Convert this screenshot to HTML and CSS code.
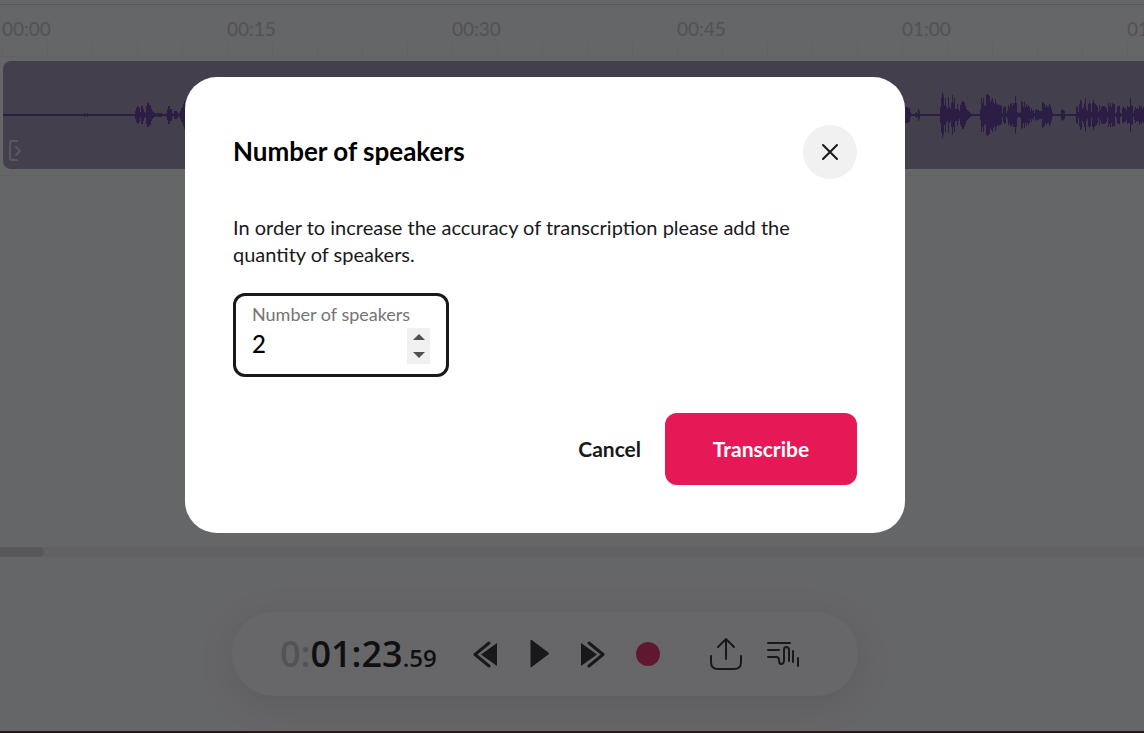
FILE: index.html
```html
<!DOCTYPE html>
<html lang="en">
<head>
    <meta charset="UTF-8">
    <meta name="viewport" content="width=device-width, initial-scale=1.0">
    <title>Number of speakers</title>
    <link rel="stylesheet" href="styles.css">
</head>
<body>

    <div class="editor">
        <main class="timeline">
            <div class="ruler">
                <span class="mark">00:00</span>
                <span class="mark">00:15</span>
                <span class="mark">00:30</span>
                <span class="mark">00:45</span>
                <span class="mark">01:00</span>
                <span class="mark">01:15</span>
            </div>
            <div class="track">
                <div class="clip">
                    <svg class="wave" height="108" aria-hidden="true"><path id="wavePath"/></svg>
                    <svg class="clip-handle" width="14" height="22" viewBox="0 0 14 22" aria-hidden="true">
                        <path d="M9 1H4Q2 1 2 3V18Q2 20 4 20H9M8 7L12 11L8 15"/>
                    </svg>
                </div>
            </div>
        </main>

        <div class="scrollbar"><div class="scrollbar-thumb"></div></div>

        <footer class="player-area">
            <div class="player">
                <div class="time"><span class="time-hours">0:</span>01:23<span class="time-ms">.59</span></div>
                <button type="button" class="icon-button rewind" aria-label="Rewind">
                    <svg width="26" height="28" viewBox="0 0 26 28">
                        <path d="M25 3V26L9 14.5Z" fill="currentColor"/>
                        <path d="M17 3L3 14.5L17 26" class="stroke thick"/>
                    </svg>
                </button>
                <button type="button" class="icon-button play" aria-label="Play">
                    <svg width="20" height="30" viewBox="0 0 20 30">
                        <path d="M1 1L19 14.5L1 28Z" fill="currentColor" stroke="currentColor" stroke-linejoin="round"/>
                    </svg>
                </button>
                <button type="button" class="icon-button forward" aria-label="Forward">
                    <svg width="26" height="28" viewBox="0 0 26 28">
                        <path d="M1 3V26L17 14.5Z" fill="currentColor"/>
                        <path d="M9 3L23 14.5L9 26" class="stroke thick"/>
                    </svg>
                </button>
                <button type="button" class="icon-button record" aria-label="Record"></button>
                <button type="button" class="icon-button export" aria-label="Export">
                    <svg width="34" height="32" viewBox="0 0 34 32">
                        <path d="M2 18V24Q2 31 9 31H25Q32 31 32 24V18M17 21V2M9 9L17 1L25 9" class="stroke"/>
                    </svg>
                </button>
                <button type="button" class="icon-button transcript" aria-label="Transcript">
                    <svg width="34" height="26" viewBox="0 0 34 26">
                        <path d="M2 2H24M2 9H13M2 16H10Q13 16 13 19Q13 23 15 23Q18 23 18 19V9Q18 6 20 6Q23 6 23 9V20M27 10V21M32 17V25" class="stroke"/>
                    </svg>
                </button>
            </div>
        </footer>
    </div>

    <div class="overlay">
        <form class="modal" role="dialog" aria-labelledby="modalTitle">
            <div class="modal-header">
                <h2 id="modalTitle">Number of speakers</h2>
                <button type="button" class="close" aria-label="Close">
                    <svg width="18" height="18" viewBox="0 0 18 18"><path d="M2 2L16 16M16 2L2 16"/></svg>
                </button>
            </div>
            <p>In order to increase the accuracy of transcription please add the quantity of speakers.</p>
            <div class="field">
                <label for="speakers">Number of speakers</label>
                <div class="field-row">
                    <input type="number" id="speakers" name="speakers" value="2" min="1">
                    <div class="spinner">
                        <button type="button" id="stepUp" aria-label="More speakers">
                            <svg width="12" height="6" viewBox="0 0 12 6"><path d="M0 6L6 0L12 6Z"/></svg>
                        </button>
                        <button type="button" id="stepDown" aria-label="Fewer speakers">
                            <svg width="12" height="6" viewBox="0 0 12 6"><path d="M0 0L6 6L12 0Z"/></svg>
                        </button>
                    </div>
                </div>
            </div>
            <div class="actions">
                <button type="button" class="cancel">Cancel</button>
                <button type="submit" class="submit">Transcribe</button>
            </div>
        </form>
    </div>

    <script src="script.js"></script>
</body>
</html>
```

FILE: styles.css
```css
* {
    margin: 0;
    padding: 0;
    box-sizing: border-box;
}

body {
    font-family: Lato, sans-serif;
    color: #18191c;
    background: #fafbfd;
    overflow: hidden;
}

button {
    border: none;
    background: none;
    font-family: inherit;
    color: inherit;
    cursor: pointer;
}

svg {
    display: block;
}

.editor {
    display: flex;
    flex-direction: column;
    height: 100vh;
    padding-top: 4px;
    border-bottom: 2px solid #581410;
}

/* Timeline */
.timeline {
    flex: 1;
    overflow: hidden;
    border-top: 1px solid #d4d5d9;
}

.ruler {
    display: flex;
    height: 52px;
    padding-left: 2px;
    border-bottom: 1px solid #f1f1f3;
    background: repeating-linear-gradient(90deg, #f1f1f3 0 1px, transparent 1px 45px) 2px 38px no-repeat;
}

.mark {
    flex: 0 0 225px;
    padding-top: 13px;
    font-size: 19px;
    line-height: 22px;
    color: #c0c1c6;
}

.track {
    padding: 4px 0 6px 3px;
    border-bottom: 1px solid #f1f1f3;
}

.clip {
    position: relative;
    height: 108px;
    overflow: hidden;
    border-radius: 8px 0 0 8px;
    background: #9989ac;
}

.wave {
    width: 100%;
    fill: #532892;
}

.clip-handle {
    position: absolute;
    left: 5px;
    bottom: 7px;
    fill: none;
    stroke: #d8d4de;
    stroke-width: 2;
    stroke-linecap: round;
    stroke-linejoin: round;
}

.scrollbar {
    height: 10px;
    background: #f1f1f3;
}

.scrollbar-thumb {
    width: 44px;
    height: 10px;
    border-radius: 0 5px 5px 0;
    background: #d4d4da;
}

/* Player */
.player-area {
    display: flex;
    justify-content: center;
    height: 174px;
    padding: 55px 54px 0 0;
}

.player {
    display: flex;
    align-items: center;
    width: 626px;
    height: 84px;
    padding-left: 48px;
    border-radius: 42px;
    background: #ffffff;
    box-shadow: 0 8px 36px rgba(24, 25, 28, 0.12);
}

.time {
    width: 192px;
    padding-top: 4px;
    font-family: "Open Sans", sans-serif;
    font-size: 36px;
    font-weight: 600;
    line-height: 48px;
    color: #000000;
    white-space: nowrap;
}

.time-hours {
    color: #c4c5ca;
}

.time-ms {
    font-size: 24px;
}

.icon-button {
    display: flex;
    flex: none;
}

.stroke {
    fill: none;
    stroke: currentColor;
    stroke-width: 2;
    stroke-linecap: round;
    stroke-linejoin: round;
}

.thick {
    stroke-width: 3;
}

.play {
    margin-left: 32px;
}

.forward,
.record {
    margin-left: 30px;
}

.record {
    width: 24px;
    height: 24px;
    border-radius: 50%;
    background: #e61957;
}

.export {
    margin-left: 49px;
}

.transcript {
    margin-left: 23px;
}

/* Modal */
.overlay {
    position: fixed;
    inset: 0;
    display: flex;
    justify-content: center;
    align-items: flex-start;
    padding: 77px 54px 0 0;
    background: rgba(24, 25, 28, 0.66);
}

.modal {
    width: 100%;
    max-width: 720px;
    padding: 48px;
    border-radius: 32px;
    background: #ffffff;
}

.modal-header {
    display: flex;
    justify-content: space-between;
    align-items: center;
}

h2 {
    padding-bottom: 2px;
    font-size: 26px;
    font-weight: 700;
    line-height: 36px;
    color: #000000;
}

.close {
    display: flex;
    justify-content: center;
    align-items: center;
    width: 54px;
    height: 54px;
    border-radius: 50%;
    background: #f1f1f1;
}

.close path {
    fill: none;
    stroke: #18191c;
    stroke-width: 2;
    stroke-linecap: round;
}

.modal p {
    margin: 35px 0 25px;
    font-size: 20px;
    line-height: 27px;
}

.field {
    width: 216px;
    height: 84px;
    padding: 8px 16px 0;
    border: 3px solid #18191c;
    border-radius: 12px;
}

.field label {
    display: block;
    font-size: 18px;
    line-height: 20px;
    color: #747474;
}

.field-row {
    display: flex;
    justify-content: space-between;
    padding-top: 4px;
}

.field input {
    width: 100%;
    min-width: 0;
    height: 30px;
    border: none;
    outline: none;
    font-family: inherit;
    font-size: 24px;
    font-weight: 500;
    color: #000000;
    background: none;
    appearance: textfield;
}

.field input::-webkit-inner-spin-button {
    display: none;
}

.spinner {
    display: flex;
    flex: none;
    flex-direction: column;
    width: 23px;
    height: 36px;
    background: #f0f0f0;
}

.spinner button {
    display: flex;
    flex: 1;
    justify-content: center;
    align-items: center;
}

.spinner path {
    fill: #505050;
}

.actions {
    display: flex;
    justify-content: flex-end;
    gap: 24px;
    margin-top: 36px;
}

.cancel,
.submit {
    height: 72px;
    padding-bottom: 2px;
    font-size: 21px;
    font-weight: 700;
}

.submit {
    width: 192px;
    border-radius: 12px;
    color: #ffffff;
    background: #e61957;
}
```

FILE: script.js
```js
// Peak heights, one per pixel, starting at each x of the clip
const peaks = {
    81: [2, 1, 1, 2],
    132: [4, 7, 9, 8, 7, 3, 9, 9, 6, 3, 2, 9, 12, 12, 10, 10, 6, 4, 3, 2, 2, 1, 2, 2, 2, 2, 2, 1, 1, 1, 1, 2, 5, 9, 9, 6, 6, 2, 1, 4, 4, 4, 3, 1, 2, 4, 7, 8, 11, 14],
    902: [8, 8, 8, 7, 7, 3, 1, 1, 1, 1, 2, 3, 2, 6, 4],
    937: [8, 18, 23, 20, 10, 17, 8, 6, 18, 8, 6, 12, 20, 12, 17, 6, 6, 11, 6, 4, 10, 12, 14, 14, 12, 9, 6, 5, 4, 3, 2],
    977: [5, 17, 12, 17, 10, 9, 20, 21, 20, 19, 13, 15, 17, 13, 11, 16, 12, 10, 11, 10, 10, 9, 2, 7, 9, 8, 2, 4, 10, 8, 11, 12, 9, 12, 12, 19, 12, 3, 2, 2, 3, 14, 13, 8, 13, 8, 11, 8, 10, 8, 4, 7, 4, 5, 2, 5, 6, 5, 5, 4, 4, 4, 13, 12, 11, 8, 10, 8, 8, 11, 9, 6, 2],
    1058: [5, 6, 5, 4],
    1073: [8, 9, 3, 11, 15, 14, 6, 8, 12, 17, 6, 4, 11, 13, 11, 3, 12, 15, 12, 11, 10, 8, 3, 10, 5, 8, 9, 9, 9, 8, 7, 3, 12, 9, 12, 8, 12, 11, 11, 1, 3, 8, 9, 9, 2, 1, 7, 9, 7, 7, 5, 9, 8, 8, 17, 10, 9, 2, 5, 8, 6, 7, 6, 10, 8, 9, 6, 8]
};

const middle = 54;
let d = "M0 53H4000V55H0Z";
for (const start in peaks) {
    peaks[start].forEach((peak, i) => {
        d += `M${Number(start) + i} ${middle - peak}h1v${peak * 2}h-1Z`;
    });
}
document.getElementById("wavePath").setAttribute("d", d);

const speakers = document.getElementById("speakers");
document.getElementById("stepUp").addEventListener("click", () => speakers.stepUp());
document.getElementById("stepDown").addEventListener("click", () => speakers.stepDown());
```
